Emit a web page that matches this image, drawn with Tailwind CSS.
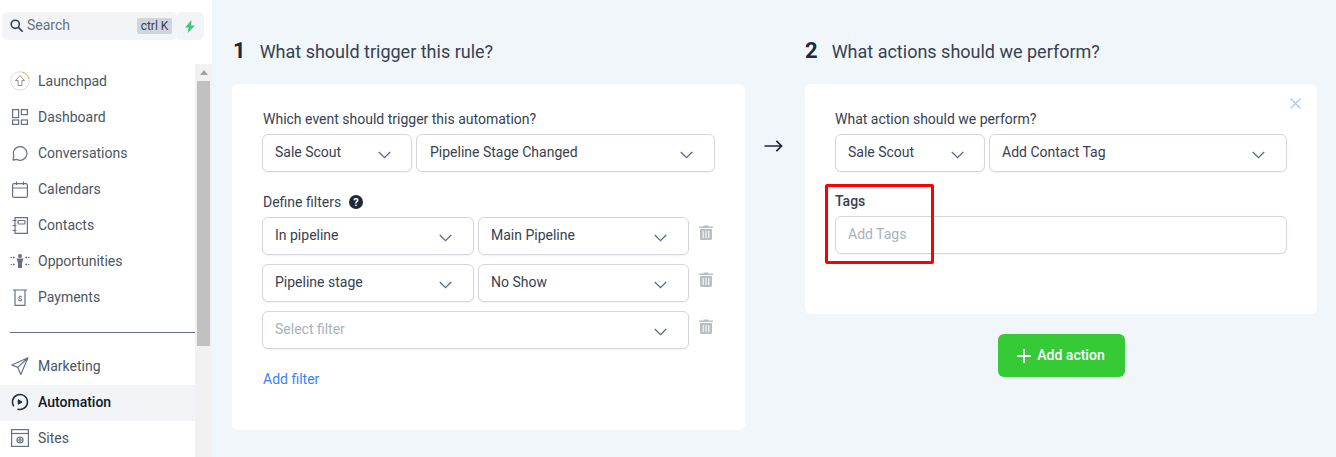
<!DOCTYPE html>
<html lang="en">
<head>
<meta charset="UTF-8">
<title>Automation</title>
<script src="https://cdn.jsdelivr.net/npm/@tailwindcss/browser@4"></script>
</head>
<body class="h-[457px] w-[1336px] overflow-hidden bg-[#f1f6fa] font-['Roboto',sans-serif] text-[14px] text-[#374151]">
<div class="flex h-[457px]">

  <!-- Sidebar -->
  <aside class="flex h-[457px] w-[212px] shrink-0 flex-col overflow-hidden bg-white">
    <div class="flex h-[64px] shrink-0 items-start pl-[2px] pt-[12px]">
      <div class="flex h-[28px] w-[174px] items-center rounded-l-[6px] rounded-r-[4px] bg-[#f2f4f7] pb-[1px] pl-[7px] pr-[4px]">
        <svg class="h-[15px] w-[15px] shrink-0 text-[#374151]" viewBox="0 0 24 24" fill="none" stroke="currentColor" stroke-width="2.6"><circle cx="10" cy="10" r="6.5"/><path d="M15 15l7 7"/></svg>
        <span class="ml-[3px] flex-1 text-[#667085]">Search</span>
        <span class="flex h-[16px] w-[35px] items-center justify-center rounded-[2px] bg-[#d0d5dd] text-[12px] text-[#344054]">ctrl K</span>
      </div>
      <div class="flex h-[28px] w-[28px] items-center justify-center rounded-[6px] bg-[#f2f4f7]">
        <svg class="h-[13px] w-[12px]" viewBox="0 0 12 13"><path d="M7.5 0L1 7.5h3.6L3.8 13 11 5.5H7z" fill="#37ca7f"/></svg>
      </div>
    </div>
    <div class="flex min-h-0 flex-1">
      <nav class="w-[195px] shrink-0">
        <a class="flex h-[36px] items-center pb-[2px] pl-[10px] text-[#4b5563]">
          <svg class="mr-[8px] h-[20px] w-[20px] shrink-0" viewBox="0 0 20 20" fill="none"><circle cx="10" cy="10" r="9.2" stroke="#d9d9d9" stroke-width="1"/><path d="M12 1.1A9.2 9.2 0 0 1 19 8" stroke="#f6a863" stroke-width="1"/><path d="M10 4.5L5.5 9.5h2.6v5h3.8v-5h2.6z" stroke="#8a8f98" stroke-width="1" stroke-linejoin="round"/></svg>
          Launchpad
        </a>
        <a class="flex h-[36px] items-center pb-[2px] pl-[12px] text-[#4b5563]">
          <svg class="mr-[10px] h-[16px] w-[16px] shrink-0" viewBox="0 0 16 16" fill="none" stroke="#667085" stroke-width="1.2"><rect x=".6" y=".6" width="6" height="8"/><rect x="9.4" y=".6" width="6" height="5"/><rect x=".6" y="11" width="6" height="4.4"/><rect x="9.4" y="11" width="6" height="4.4"/></svg>
          Dashboard
        </a>
        <a class="flex h-[36px] items-center pb-[2px] pl-[12px] text-[#4b5563]">
          <svg class="mr-[10px] h-[16px] w-[16px] shrink-0" viewBox="0 0 16 16" fill="none" stroke="#667085" stroke-width="1.2" stroke-linejoin="round"><path d="M1 15.2l.9-4A6.8 6.8 0 1 1 4.8 14.4z"/></svg>
          Conversations
        </a>
        <a class="flex h-[36px] items-center pb-[2px] pl-[12px] text-[#4b5563]">
          <svg class="mr-[10px] h-[17px] w-[16px] shrink-0" viewBox="0 0 16 17" fill="none" stroke="#667085" stroke-width="1.2"><rect x=".6" y="2.6" width="14.8" height="13.8" rx="1.5"/><path d="M.6 7h14.8M4.5 .5v3.5M11.5 .5v3.5"/></svg>
          Calendars
        </a>
        <a class="flex h-[36px] items-center pb-[2px] pl-[12px] text-[#4b5563]">
          <svg class="mr-[10px] h-[17px] w-[16px] shrink-0" viewBox="0 0 16 17" fill="none" stroke="#667085" stroke-width="1.2"><path d="M3 .6h12.4v15.8H3zM.5 3.5h4M.5 8.5h4M.5 13.5h4"/><rect x="6" y="3.5" width="7" height="3.5" rx=".8"/></svg>
          Contacts
        </a>
        <a class="flex h-[36px] items-center pb-[2px] pl-[10px] text-[#4b5563]">
          <svg class="mr-[8px] h-[14px] w-[20px] shrink-0" viewBox="0 0 20 14" fill="#667085"><circle cx="10" cy="2" r="2"/><path d="M6.500 4.500h7l-1.500 4.500v5H8V9z"/><path d="M.5 3.500h1.500M3 3.500h1M.5 10.500h1.500M3 10.500h1M16 3.500h1M18 3.500h1.500M16 10.500h1M18 10.500h1.500" stroke="#667085" stroke-width="1.200"/><path d="M5 3.500L3.500 2v3zM5 10.500L3.500 9v3zM15 3.500L16.500 2v3zM15 10.500L16.500 9v3z"/></svg>
          Opportunities
        </a>
        <a class="flex h-[36px] items-center pb-[2px] pl-[12px] text-[#4b5563]">
          <svg class="mr-[10px] h-[17px] w-[16px] shrink-0" viewBox="0 0 16 17" fill="none" stroke="#667085" stroke-width="1.2"><path d="M1 1h14M3 1v15.4h10V1"/><text x="8" y="11.5" font-size="8" font-weight="700" text-anchor="middle" fill="#667085" stroke="none" font-family="Roboto">$</text></svg>
          Payments
        </a>
        <div class="ml-[10px] mt-[16px] h-px bg-[#667085]"></div>
        <a class="mt-[16px] flex h-[36px] items-center pb-[2px] pl-[11px] text-[#4b5563]">
          <svg class="mr-[9px] h-[18px] w-[18px] shrink-0" viewBox="0 0 18 18" fill="none" stroke="#667085" stroke-width="1.2" stroke-linejoin="round"><path d="M17 .8L.8 8l6 2.4 3 7zM6.8 10.400L17 .8"/></svg>
          Marketing
        </a>
        <a class="flex h-[36px] items-center bg-[#f2f4f7] pb-[2px] pl-[11px] font-medium text-[#101828]">
          <svg class="mr-[9px] h-[18px] w-[18px] shrink-0" viewBox="0 0 18 18" fill="none" stroke="#1f2937" stroke-width="1.5"><path d="M2.500 12.750A7.500 7.500 0 1 1 7 16.200" stroke-linecap="round"/><path d="M7.200 6.800v4.400l3.800-2.200z" fill="#1f2937" stroke-width="1" stroke-linejoin="round"/></svg>
          Automation
        </a>
        <a class="flex h-[36px] items-center pb-[2px] pl-[11px] text-[#4b5563]">
          <svg class="mr-[9px] h-[18px] w-[18px] shrink-0" viewBox="0 0 18 18" fill="none" stroke="#667085" stroke-width="1.2"><rect x=".6" y=".6" width="16.800" height="16.800"/><path d="M.6 4.500h16.800"/><circle cx="9" cy="11" r="3"/><path d="M6 11h6M9 8v6"/></svg>
          Sites
        </a>
      </nav>
      <div class="flex h-full w-[17px] shrink-0 flex-col items-center bg-[#f1f1f1]">
        <svg class="mt-[6px] h-[5px] w-[8px]" viewBox="0 0 8 5"><path d="M4 0l4 5H0z" fill="#a3a3a3"/></svg>
        <div class="mt-[6px] h-[265px] w-[13px] bg-[#c1c1c1]"></div>
      </div>
    </div>
  </aside>

  <!-- Main -->
  <main class="flex min-w-0 flex-1 items-start pl-[20px] pt-[38px]">

    <!-- Trigger column -->
    <section class="w-[513px] shrink-0">
      <h2 class="flex h-[26px] items-center text-[18px] text-[#374151]">
        <span class="mr-[14px] pl-[1px] text-[22px] font-bold leading-none text-[#1f2937]">1</span>What should trigger this rule?
      </h2>
      <div class="mt-[20px] h-[346px] rounded-[6px] bg-white pl-[30px] pr-[30px] pt-[25px]">
        <p class="ml-[1px] h-[20px] leading-[20px]">Which event should trigger this automation?</p>
        <div class="mt-[5px] flex gap-[4px]">
          <div class="flex h-[38px] w-[150px] items-center justify-between rounded-[6px] border border-[#d5d5de] bg-white pb-[2px] pl-[12px] pr-[20px] shadow-[0_1px_2px_rgba(0,0,0,0.05)]">
            Sale Scout
            <svg class="mt-[5px] h-[8px] w-[13px] text-[#5b6b7f]" viewBox="0 0 13 8" fill="none" stroke="currentColor" stroke-width="1.3"><path d="M.8 1l5.700 5.700L12.200 1"/></svg>
          </div>
          <div class="flex h-[38px] w-[299px] items-center justify-between rounded-[6px] border border-[#d5d5de] bg-white pb-[2px] pl-[13px] pr-[21px] shadow-[0_1px_2px_rgba(0,0,0,0.05)]">
            Pipeline Stage Changed
            <svg class="mt-[5px] h-[8px] w-[13px] text-[#5b6b7f]" viewBox="0 0 13 8" fill="none" stroke="currentColor" stroke-width="1.3"><path d="M.8 1l5.700 5.700L12.200 1"/></svg>
          </div>
        </div>
        <div class="ml-[1px] mt-[20px] flex h-[20px] items-center">
          Define filters
          <svg class="ml-[8px] h-[14px] w-[14px]" viewBox="0 0 14 14"><circle cx="7" cy="7" r="7" fill="#1f2937"/><text x="7" y="11" font-size="11" font-weight="700" text-anchor="middle" fill="#fff" font-family="Roboto">?</text></svg>
        </div>
        <div class="mt-[5px] flex items-start">
          <div class="flex h-[38px] w-[212px] items-center justify-between rounded-[6px] border border-[#d5d5de] bg-white pb-[2px] pl-[12px] pr-[21px] shadow-[0_1px_2px_rgba(0,0,0,0.05)]">
            In pipeline
            <svg class="mt-[5px] h-[8px] w-[13px] text-[#5b6b7f]" viewBox="0 0 13 8" fill="none" stroke="currentColor" stroke-width="1.3"><path d="M.8 1l5.700 5.700L12.200 1"/></svg>
          </div>
          <div class="ml-[4px] flex h-[38px] w-[211px] items-center justify-between rounded-[6px] border border-[#d5d5de] bg-white pb-[2px] pl-[12px] pr-[21px] shadow-[0_1px_2px_rgba(0,0,0,0.05)]">
            Main Pipeline
            <svg class="mt-[5px] h-[8px] w-[13px] text-[#5b6b7f]" viewBox="0 0 13 8" fill="none" stroke="currentColor" stroke-width="1.3"><path d="M.8 1l5.700 5.700L12.200 1"/></svg>
          </div>
          <svg class="ml-[10px] mt-[8px] h-[15px] w-[14px]" viewBox="0 0 14 15"><path d="M4.500 1.500V.5h5v1H14V3H0V1.500zM1 4h12v9.500a1.500 1.500 0 0 1-1.500 1.500h-9A1.500 1.500 0 0 1 1 13.500z" fill="#b9bec5"/><path d="M4.200 6v7M7 6v7M9.800 6v7" stroke="#fff" stroke-width="1"/></svg>
        </div>
        <div class="mt-[9px] flex items-start">
          <div class="flex h-[38px] w-[212px] items-center justify-between rounded-[6px] border border-[#d5d5de] bg-white pb-[2px] pl-[12px] pr-[21px] shadow-[0_1px_2px_rgba(0,0,0,0.05)]">
            Pipeline stage
            <svg class="mt-[5px] h-[8px] w-[13px] text-[#5b6b7f]" viewBox="0 0 13 8" fill="none" stroke="currentColor" stroke-width="1.3"><path d="M.8 1l5.700 5.700L12.200 1"/></svg>
          </div>
          <div class="ml-[4px] flex h-[38px] w-[211px] items-center justify-between rounded-[6px] border border-[#d5d5de] bg-white pb-[2px] pl-[12px] pr-[21px] shadow-[0_1px_2px_rgba(0,0,0,0.05)]">
            No Show
            <svg class="mt-[5px] h-[8px] w-[13px] text-[#5b6b7f]" viewBox="0 0 13 8" fill="none" stroke="currentColor" stroke-width="1.3"><path d="M.8 1l5.700 5.700L12.200 1"/></svg>
          </div>
          <svg class="ml-[10px] mt-[8px] h-[15px] w-[14px]" viewBox="0 0 14 15"><path d="M4.500 1.500V.5h5v1H14V3H0V1.500zM1 4h12v9.500a1.500 1.500 0 0 1-1.500 1.500h-9A1.500 1.500 0 0 1 1 13.500z" fill="#b9bec5"/><path d="M4.200 6v7M7 6v7M9.800 6v7" stroke="#fff" stroke-width="1"/></svg>
        </div>
        <div class="mt-[9px] flex items-start">
          <div class="flex h-[38px] w-[427px] items-center justify-between rounded-[6px] border border-[#d5d5de] bg-white pb-[2px] pl-[12px] pr-[21px] text-[#a9b1bc] shadow-[0_1px_2px_rgba(0,0,0,0.05)]">
            Select filter
            <svg class="mt-[5px] h-[8px] w-[13px] text-[#5b6b7f]" viewBox="0 0 13 8" fill="none" stroke="currentColor" stroke-width="1.3"><path d="M.8 1l5.700 5.700L12.200 1"/></svg>
          </div>
          <svg class="ml-[10px] mt-[8px] h-[15px] w-[14px]" viewBox="0 0 14 15"><path d="M4.500 1.500V.5h5v1H14V3H0V1.500zM1 4h12v9.500a1.500 1.500 0 0 1-1.500 1.500h-9A1.500 1.500 0 0 1 1 13.500z" fill="#b9bec5"/><path d="M4.200 6v7M7 6v7M9.800 6v7" stroke="#fff" stroke-width="1"/></svg>
        </div>
        <a class="ml-[1px] mt-[20px] block h-[20px] leading-[20px] text-[#3b82f6]">Add filter</a>
      </div>
    </section>

    <!-- Arrow between columns -->
    <div class="flex h-[26px] w-[60px] shrink-0 items-start justify-center pt-[101px]">
      <svg class="ml-[-3px] h-[14px] w-[19px] shrink-0" viewBox="0 0 20 14" fill="none" stroke="#1f2937" stroke-width="1.800"><path d="M.5 7h18M13 1.500L18.500 7 13 12.500"/></svg>
    </div>

    <!-- Action column -->
    <section class="w-[512px] shrink-0">
      <h2 class="flex h-[26px] items-center text-[18px] text-[#374151]">
        <span class="mr-[14px] text-[22px] font-bold leading-none text-[#1f2937]">2</span>What actions should we perform?
      </h2>
      <div class="relative mt-[20px] h-[230px] rounded-[6px] bg-white pl-[30px] pr-[30px] pt-[25px]">
        <svg class="absolute right-[16px] top-[14px] h-[11px] w-[11px] text-[#a9c9f8]" viewBox="0 0 11 11" fill="none" stroke="currentColor" stroke-width="1.300"><path d="M.5.5l10 10M10.500.5l-10 10"/></svg>
        <p class="h-[20px] leading-[20px]">What action should we perform?</p>
        <div class="mt-[5px] flex gap-[4px]">
          <div class="flex h-[38px] w-[150px] items-center justify-between rounded-[6px] border border-[#d5d5de] bg-white pb-[2px] pl-[12px] pr-[20px] shadow-[0_1px_2px_rgba(0,0,0,0.05)]">
            Sale Scout
            <svg class="mt-[5px] h-[8px] w-[13px] text-[#5b6b7f]" viewBox="0 0 13 8" fill="none" stroke="currentColor" stroke-width="1.3"><path d="M.8 1l5.700 5.700L12.200 1"/></svg>
          </div>
          <div class="flex h-[38px] w-[298px] items-center justify-between rounded-[6px] border border-[#d5d5de] bg-white pb-[2px] pl-[12px] pr-[21px] shadow-[0_1px_2px_rgba(0,0,0,0.05)]">
            Add Contact Tag
            <svg class="mt-[5px] h-[8px] w-[13px] text-[#5b6b7f]" viewBox="0 0 13 8" fill="none" stroke="currentColor" stroke-width="1.3"><path d="M.8 1l5.700 5.700L12.200 1"/></svg>
          </div>
        </div>
        <p class="mt-[19px] h-[20px] font-medium leading-[20px]">Tags</p>
        <div class="mt-[5px] flex h-[38px] w-[452px] items-center rounded-[6px] border border-[#d5d5de] bg-white pb-[2px] pl-[12px] text-[#a9b1bc] shadow-[0_1px_2px_rgba(0,0,0,0.05)]">Add Tags</div>
        <!-- Red annotation box from the screenshot -->
        <div class="absolute left-[20px] top-[100px] h-[80px] w-[109px] rounded-[2px] border-[3px] border-[#ff0000]"></div>
      </div>
      <button class="mx-auto mt-[20px] flex h-[43px] w-[127px] items-center justify-center rounded-[6px] bg-[#37ca37] font-medium text-white">
        <svg class="mr-[6px] h-[14px] w-[14px]" viewBox="0 0 14 14" fill="none" stroke="#fff" stroke-width="1.800"><path d="M7 0v14M0 7h14"/></svg>
        Add action
      </button>
    </section>
  </main>
</div>
</body>
</html>
